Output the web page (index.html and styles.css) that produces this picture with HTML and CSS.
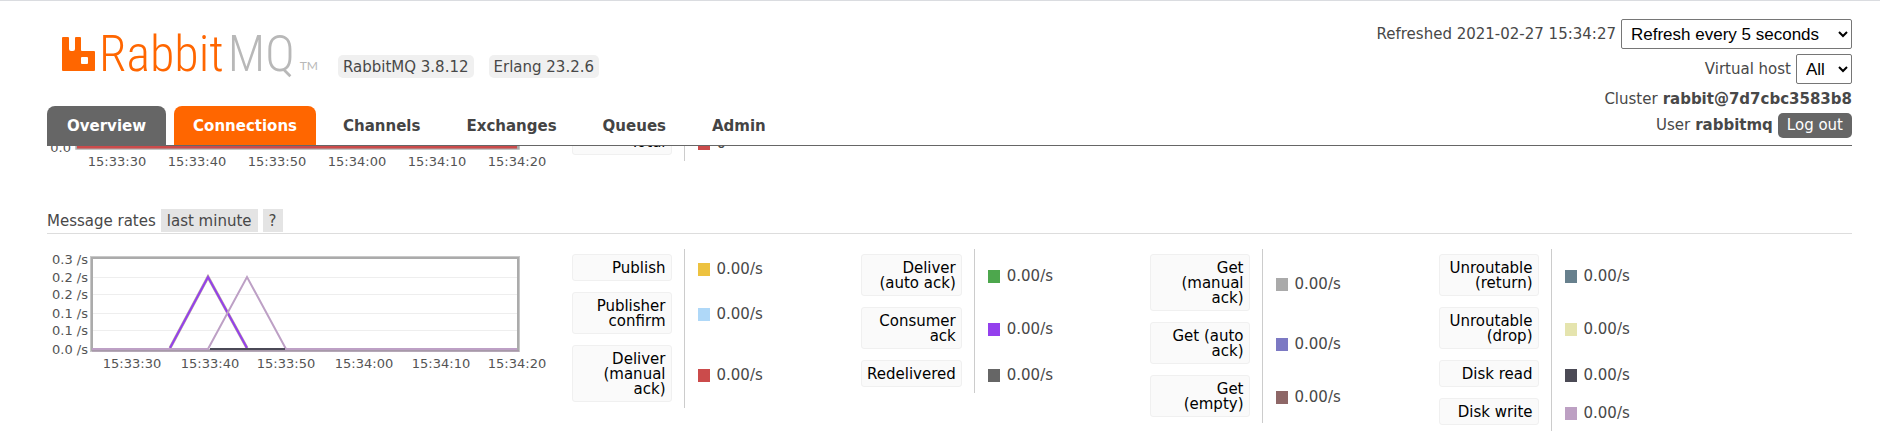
FILE: index.html
```html
<!DOCTYPE html>
<html lang="en">
<head>
<meta charset="utf-8">
<title>RabbitMQ Management</title>
<link rel="stylesheet" href="styles.css">
</head>
<body>
<header class="header">
  <div class="header-inner">
    <div class="brand-side">
      <div class="brand">
        <a class="logo" href="#">
          <svg class="logo-mark" width="34" height="35" viewBox="0 0 34 35" aria-hidden="true"><path fill="#f60" fill-rule="evenodd" d="M1 0H6Q7 0 7 1V12Q7 14 9 14H11Q13 14 13 12V1Q13 0 14 0H18Q19 0 19 1V13Q19 14 20 14H32Q33 14 33 15V33Q33 34 32 34H1Q0 34 0 33V1Q0 0 1 0ZM20 20Q19 20 19 21V26Q19 27 20 27H25Q26 27 26 26V21Q26 20 25 20Z"/></svg>
          <span class="word">Rabbit<span class="mq">MQ</span></span><span class="tm">TM</span>
        </a>
        <span class="version">RabbitMQ 3.8.12</span>
        <span class="version">Erlang 23.2.6</span>
      </div>
      <nav class="tabs">
        <a class="tab current" href="#">Overview</a>
        <a class="tab hover" href="#">Connections</a>
        <a class="tab" href="#">Channels</a>
        <a class="tab" href="#">Exchanges</a>
        <a class="tab" href="#">Queues</a>
        <a class="tab" href="#">Admin</a>
      </nav>
    </div>
    <div class="status">
      <div class="status-row"><label for="refresh">Refreshed 2021-02-27 15:34:27</label><select id="refresh" class="wide"><option>Refresh every 5 seconds</option></select></div>
      <div class="status-row"><label for="vhost">Virtual host</label><select id="vhost" class="narrow"><option>All</option></select></div>
      <div class="status-row text-row"><span>Cluster</span><b>rabbit@7d7cbc3583b8</b></div>
      <div class="status-row"><span>User</span><b>rabbitmq</b><button class="logout" type="button">Log out</button></div>
    </div>
  </div>
</header>
<main class="main">
  <section class="panel queued">
    <svg class="chart" width="505" height="57" viewBox="0 0 505 57">
      <path d="M28.5 0V26.5H472.5V0" fill="none" stroke="#c4c4c4"/>
      <path d="M30 0V25H471V0" fill="none" stroke="#ababab" stroke-width="2"/>
      <path d="M30 24H470" stroke="#cb4b4b" stroke-width="3"/>
      <text x="24" y="29" class="end">0.0</text>
      <g class="mid"><text x="70" y="43">15:33:30</text><text x="150" y="43">15:33:40</text><text x="230" y="43">15:33:50</text><text x="310" y="43">15:34:00</text><text x="390" y="43">15:34:10</text><text x="470" y="43">15:34:20</text></g>
    </svg>
    <div class="legends">
      <table class="legend"><tr><th><span class="label">Total</span></th><td><i class="swatch red"></i>0</td></tr></table>
    </div>
  </section>
  <h2 class="title">Message rates <button class="chip" type="button">last minute</button><button class="chip" type="button">?</button></h2>
  <section class="panel">
    <svg class="chart" width="505" height="125" viewBox="0 0 505 125">
      <path d="M45 28.5H470M45 45.5H470M45 64.5H470M45 81.5H470" stroke="#eee"/>
      <rect x="43.500" y="7.500" width="429" height="95" fill="none" stroke="#c8c8c8"/>
      <rect x="45" y="9" width="426" height="92" fill="none" stroke="#ababab" stroke-width="2"/>
      <path d="M123 99L161 28L200 99" fill="none" stroke="#8c6767" stroke-width="3" opacity=".6"/>
      <path d="M123 99L161 28L200 99" fill="none" stroke="#9440ed" stroke-width="2"/>
      <path d="M45 102H472" stroke="#a287a6"/>
      <path class="write" d="M45 100H161L200 28L239 100H470" fill="none" stroke="#bda0c5"/>
      <path d="M163 100H238" stroke="#4b4a57" stroke-width="2"/>
      <g class="end"><text x="41" y="15">0.3 /s</text><text x="41" y="33">0.2 /s</text><text x="41" y="50">0.2 /s</text><text x="41" y="69">0.1 /s</text><text x="41" y="86">0.1 /s</text><text x="41" y="105">0.0 /s</text></g>
      <g class="mid"><text x="85" y="119">15:33:30</text><text x="163" y="119">15:33:40</text><text x="239" y="119">15:33:50</text><text x="317" y="119">15:34:00</text><text x="394" y="119">15:34:10</text><text x="470" y="119">15:34:20</text></g>
    </svg>
    <div class="legends">
      <table class="legend">
        <tr><th><span class="label">Publish</span></th><td><i class="swatch yellow"></i>0.00/s</td></tr>
        <tr><th><span class="label">Publisher confirm</span></th><td><i class="swatch sky"></i>0.00/s</td></tr>
        <tr><th><span class="label">Deliver (manual ack)</span></th><td><i class="swatch red"></i>0.00/s</td></tr>
      </table>
      <table class="legend">
        <tr><th><span class="label">Deliver (auto ack)</span></th><td><i class="swatch green"></i>0.00/s</td></tr>
        <tr><th><span class="label">Consumer ack</span></th><td><i class="swatch violet"></i>0.00/s</td></tr>
        <tr><th><span class="label">Redelivered</span></th><td><i class="swatch gray"></i>0.00/s</td></tr>
      </table>
      <table class="legend">
        <tr><th><span class="label">Get (manual ack)</span></th><td><i class="swatch silver"></i>0.00/s</td></tr>
        <tr><th><span class="label">Get (auto ack)</span></th><td><i class="swatch blue"></i>0.00/s</td></tr>
        <tr><th><span class="label">Get (empty)</span></th><td><i class="swatch brown"></i>0.00/s</td></tr>
      </table>
      <table class="legend">
        <tr><th><span class="label">Unroutable (return)</span></th><td><i class="swatch slate"></i>0.00/s</td></tr>
        <tr><th><span class="label">Unroutable (drop)</span></th><td><i class="swatch cream"></i>0.00/s</td></tr>
        <tr><th><span class="label">Disk read</span></th><td><i class="swatch ink"></i>0.00/s</td></tr>
        <tr><th><span class="label">Disk write</span></th><td><i class="swatch mauve"></i>0.00/s</td></tr>
      </table>
    </div>
  </section>
</main>
</body>
</html>
```
FILE: styles.css
```css
* { box-sizing: border-box; }
body { margin: 0; background: #fff; color: #484848; font: 15px/17px Verdana, "DejaVu Sans", sans-serif; }
a { color: inherit; text-decoration: none; }

.header { position: relative; z-index: 1; padding: 0 28px 0 47px; background: #fff; border-top: 1px solid #dadce0; }
.header-inner { display: flex; justify-content: space-between; border-bottom: 1px solid #666; }
.brand-side { display: flex; flex-direction: column; justify-content: space-between; }
.brand { display: flex; align-items: flex-end; gap: 15px; padding: 35px 0 0 15px; }
.logo { display: flex; align-items: flex-end; padding-bottom: 6px; margin-right: 5px; }
.logo-mark { margin-right: 3px; }
.word { color: #f60; font: 300 50px/36px "Roboto Condensed", "Liberation Sans Narrow", Lato, sans-serif; }
.mq { margin-left: 4px; color: #b8b8b8; }
.tm { color: #b8b8b8; font: 12px/12px Lato, sans-serif; margin-left: 5px; }
.version { padding: 4px 5px 2px; border-radius: 5px; background: #f0f0f0; }

.tabs { display: flex; gap: 8px; }
.tab { padding: 12px 19px 10px; border-radius: 8px 8px 0 0; font-weight: bold; color: #444; }
.tab.current { padding: 12px 20px 10px; background: #666; color: #fff; }
.tab.hover { background: #f60; color: #fff; }

.status { display: flex; flex-direction: column; align-items: flex-end; gap: 5px; padding: 18px 0 7px; }
.status-row { display: flex; align-items: center; gap: 5px; }
.text-row { padding: 2px 0 0; }
select { height: 30px; padding: 4px 5px; border: 1px solid #767676; border-radius: 2px; background: #fff; color: #000; font: 17px Arial, "Liberation Sans", sans-serif; }
.wide { width: 231px; }
.narrow { width: 56px; }
.logout { padding: 4px 9px; border: 0; border-radius: 5px; background: #666; color: #fff; font: inherit; }

.main { margin-top: -23px; padding: 0 28px 0 47px; }
.panel { display: flex; gap: 20px; }
.queued { margin-bottom: 29px; }
.chart { flex: none; font-size: 13px; fill: #545454; }
.write { stroke-width: 2px; }
.end { text-anchor: end; }
.mid { text-anchor: middle; }
.title { display: flex; align-items: baseline; gap: 5px; margin: 0 0 15px; padding: 0 0 1px; border-bottom: 1px solid #ddd; font-size: 15px; line-height: 17px; font-weight: normal; }
.chip { padding: 4px 6px 2px; border: 0; background: #e4e4e4; color: inherit; font: inherit; }

.legends { display: flex; align-items: flex-start; }
.legend { width: 289px; border-collapse: collapse; }
.legend th { width: 112px; padding: 5px 12px 6px 0; font-weight: normal; }
.label { display: block; padding: 6px 5px 4px; border: 1px solid #f0f0f0; border-radius: 3px; background: #fafafa; color: #000; line-height: 15px; text-align: right; }
.legend td { padding: 2px 0 0 13px; border-left: 1px solid #ccc; vertical-align: middle; }
.swatch { display: inline-block; width: 12px; height: 13px; margin-right: 7px; vertical-align: -2px; }
.yellow { background: #edc240; }
.sky { background: #afd8f8; }
.red { background: #cb4b4b; }
.green { background: #4da74d; }
.violet { background: #9440ed; }
.gray { background: #666; }
.silver { background: #aaa; }
.blue { background: #7c79c3; }
.brown { background: #8e6767; }
.slate { background: #67808d; }
.cream { background: #e5e4ae; }
.ink { background: #4b4a55; }
.mauve { background: #bda0c3; }
```
